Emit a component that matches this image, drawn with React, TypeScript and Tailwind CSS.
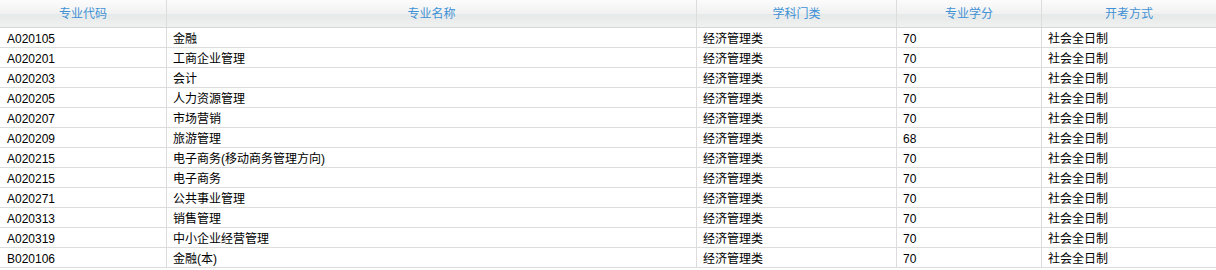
const rows = [
  ["A020105", "金融", "经济管理类", "70", "社会全日制"],
  ["A020201", "工商企业管理", "经济管理类", "70", "社会全日制"],
  ["A020203", "会计", "经济管理类", "70", "社会全日制"],
  ["A020205", "人力资源管理", "经济管理类", "70", "社会全日制"],
  ["A020207", "市场营销", "经济管理类", "70", "社会全日制"],
  ["A020209", "旅游管理", "经济管理类", "68", "社会全日制"],
  ["A020215", "电子商务(移动商务管理方向)", "经济管理类", "70", "社会全日制"],
  ["A020215", "电子商务", "经济管理类", "70", "社会全日制"],
  ["A020271", "公共事业管理", "经济管理类", "70", "社会全日制"],
  ["A020313", "销售管理", "经济管理类", "70", "社会全日制"],
  ["A020319", "中小企业经营管理", "经济管理类", "70", "社会全日制"],
  ["B020106", "金融(本)", "经济管理类", "70", "社会全日制"],
];

const headers = ["专业代码", "专业名称", "学科门类", "专业学分", "开考方式"];

const cols = "grid grid-cols-[167px_530px_200px_145px_174px]";

export default function App() {
  return (
    <div className="w-[1216px] h-[270px] bg-white font-['Liberation_Sans','Noto_Sans_CJK_SC',sans-serif] text-[12px]">
      <div
        className={`${cols} h-[28px] border-b border-[#d6d6d6] bg-[linear-gradient(to_bottom,#fcfcfc_0%,#f1f1f1_50%,#e6e9e9_52%,#f0f1f1_100%)]`}
      >
        {headers.map((h, i) => (
          <div
            key={h}
            className={`flex items-center justify-center text-[#4192d4] ${
              i < 4 ? "border-r border-[#dcdcdc]" : ""
            }`}
          >
            {h}
          </div>
        ))}
      </div>
      {rows.map((r, idx) => (
        <div key={idx} className={`${cols} h-[20px] border-b border-[#dcdcdc]`}>
          {r.map((c, i) => (
            <div
              key={i}
              className={`flex items-center pt-[2px] text-black leading-none ${
                i === 0 ? "pl-[7px]" : "pl-[6px]"
              } ${i < 4 ? "border-r border-[#dcdcdc]" : ""}`}
            >
              {c}
            </div>
          ))}
        </div>
      ))}
    </div>
  );
}
